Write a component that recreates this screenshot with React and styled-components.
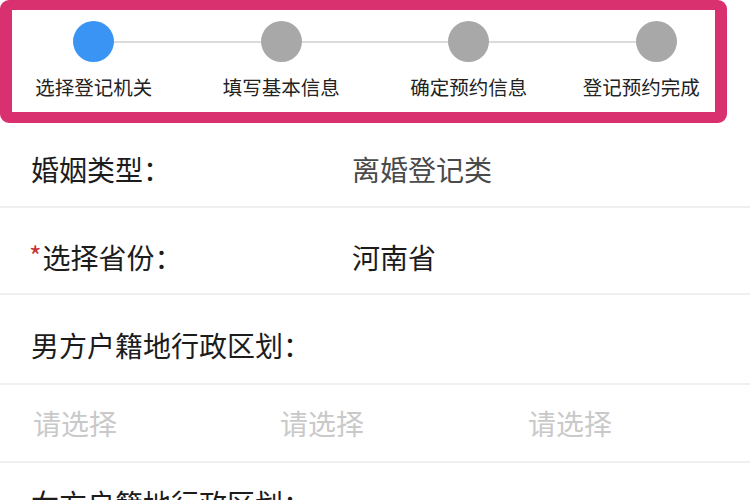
import styled, { createGlobalStyle } from "styled-components";

const GlobalStyle = createGlobalStyle`
  html, body {
    margin: 0;
    padding: 0;
    background: #ffffff;
  }
  body {
    font-family: "Noto Sans CJK SC", "Noto Sans", sans-serif;
    color: #1c1c1c;
  }
`;

const steps = ["选择登记机关", "填写基本信息", "确定预约信息", "登记预约完成"];

const PageFrame = styled.div`
  width: 750px;
  height: 500px;
  overflow: hidden;
  background: #ffffff;
`;

const Header = styled.div`
  position: relative;
  height: 122px;
  box-sizing: border-box;
`;

// pink annotation box drawn over the steps header
const Highlight = styled.div`
  position: absolute;
  left: 0;
  top: 0;
  width: 727px;
  height: 123px;
  box-sizing: border-box;
  border: solid #d9306f;
  border-width: 10px 12px 11px 12px;
  border-radius: 9px;
  pointer-events: none;
`;

const StepsRow = styled.div`
  display: grid;
  grid-template-columns: repeat(4, 1fr);
  padding-top: 21px;
`;

const Step = styled.div`
  position: relative;
  display: flex;
  flex-direction: column;
  align-items: center;

  &::before {
    content: "";
    display: ${props => (props.$first ? "none" : "block")};
    position: absolute;
    top: 20px;
    right: 50%;
    width: 100%;
    height: 2px;
    background: #dcdcdc;
  }
`;

const Dot = styled.div`
  position: relative;
  width: 41px;
  height: 41px;
  border-radius: 50%;
  background: ${props => (props.$active ? "#3a94f4" : "#a8a8a8")};
  z-index: 1;
`;

const StepLabel = styled.div`
  margin-top: 13px;
  font-size: 19.5px;
  line-height: 24px;
  color: #222222;
  white-space: nowrap;
  transform: translateX(${props => props.$shift || 0}px);
`;

const FormRow = styled.div`
  display: flex;
  align-items: center;
  height: ${props => props.$h}px;
  box-sizing: border-box;
  padding: ${props => props.$pt}px 0 0 31px;
  border-bottom: 2px solid #efefef;
  font-size: 28px;
  line-height: 36px;
`;

const Label = styled.div`
  width: 321px;
  flex-shrink: 0;
  color: #1c1c1c;
  white-space: nowrap;
`;

const Required = styled.span`
  display: inline-block;
  margin-left: -2px;
  margin-right: 1px;
  color: #c8303a;
  font-size: 27px;
  vertical-align: top;
  line-height: 34px;
`;

const Value = styled.div`
  color: ${props => (props.$muted ? "#4a4a4a" : "#1c1c1c")};
`;

const PickerRow = styled.div`
  display: grid;
  grid-template-columns: 247px 248px 1fr;
  align-items: center;
  height: 78px;
  box-sizing: border-box;
  padding-left: 33px;
  border-bottom: 2px solid #efefef;
  font-size: 28px;
  line-height: 36px;
`;

const Placeholder = styled.div`
  color: #c9c9c9;
`;

export default function App() {
  return (
    <PageFrame>
      <GlobalStyle />
      <Header>
        <StepsRow>
          {steps.map((name, i) => (
            <Step key={name} $first={i === 0}>
              <Dot $active={i === 0} />
              <StepLabel $shift={i === steps.length - 1 ? -15 : 0}>
                {name}
              </StepLabel>
            </Step>
          ))}
        </StepsRow>
        <Highlight />
      </Header>

      <FormRow $h={86} $pt={10}>
        <Label>婚姻类型：</Label>
        <Value $muted>离婚登记类</Value>
      </FormRow>
      <FormRow $h={87} $pt={12}>
        <Label>
          <Required>*</Required>选择省份：
        </Label>
        <Value>河南省</Value>
      </FormRow>
      <FormRow $h={90} $pt={12}>
        <Label>男方户籍地行政区划：</Label>
      </FormRow>
      <PickerRow>
        <Placeholder>请选择</Placeholder>
        <Placeholder>请选择</Placeholder>
        <Placeholder>请选择</Placeholder>
      </PickerRow>
      <FormRow $h={82} $pt={0}>
        <Label>女方户籍地行政区划：</Label>
      </FormRow>
    </PageFrame>
  );
}
